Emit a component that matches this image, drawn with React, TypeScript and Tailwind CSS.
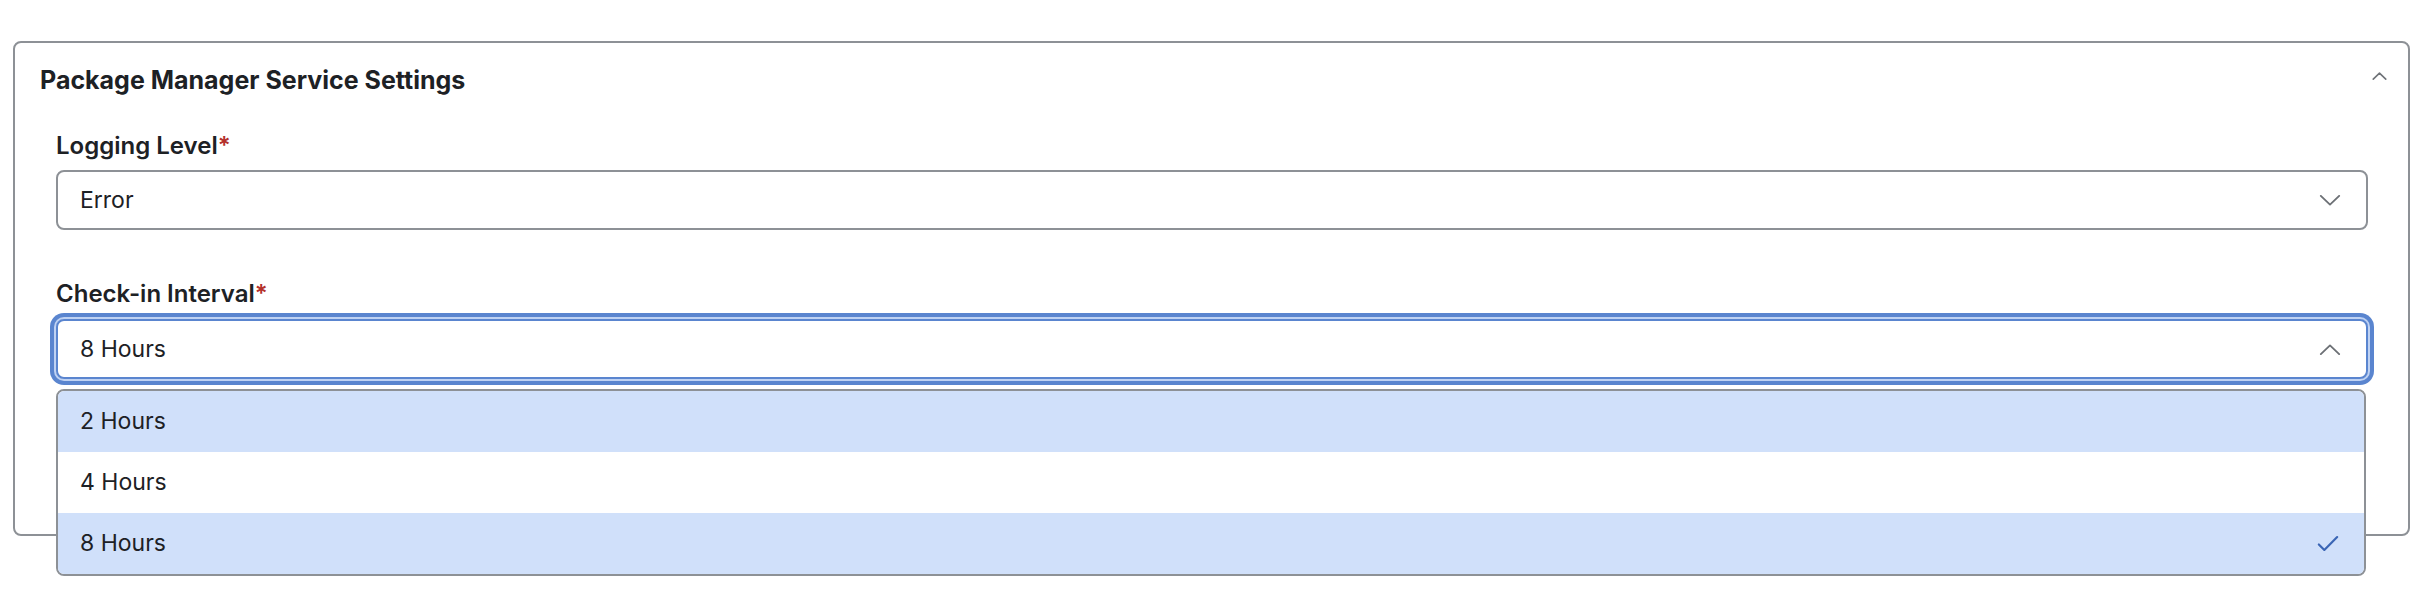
import { useState } from 'react'

const OPTIONS = ['2 Hours', '4 Hours', '8 Hours']

function Chevron({ up, className, width = 2 }: { up?: boolean; className?: string; width?: number }) {
  return (
    <svg viewBox="0 0 24 12" className={className} fill="none" stroke="currentColor" strokeWidth={width} strokeLinecap="round" strokeLinejoin="round">
      {up ? <path d="M2 11 L12 1.5 L22 11" /> : <path d="M2 1 L12 10.5 L22 1" />}
    </svg>
  )
}

function Label({ children }: { children: React.ReactNode }) {
  return (
    <div className="text-[24px] leading-[28px] font-semibold text-[#1d2125]">
      {children}
      <span className="text-[#b3312c]">*</span>
    </div>
  )
}

export default function App() {
  const [interval, setInterval] = useState('8 Hours')

  return (
    <div className="w-full h-[598px] bg-white pl-[13px] pr-[11px] pt-[41px] font-['Inter',sans-serif] text-[#1d2125]">
      <div className="border-2 border-[#8d9196] rounded-lg h-[495px]">
        {/* Header */}
        <div className="flex items-start justify-between pl-[25px] pr-[21px] pt-[22px]">
          <h2 className="text-[25px] leading-[30px] font-bold">Package Manager Service Settings</h2>
          <Chevron up width={2.6} className="mt-[7px] w-[15px] h-[8px] text-[#6f7378]" />
        </div>

        {/* Fields */}
        <div className="pl-[41px] pr-[40px] pt-[37px]">
          <Label>Logging Level</Label>
          <div className="mt-[10px] h-[60px] border-2 border-[#8d9196] rounded-lg flex items-center justify-between pl-[22px] pr-[25px]">
            <span className="text-[23px]">Error</span>
            <Chevron className="w-[22px] h-[11px] text-[#6c7075]" />
          </div>

          <div className="mt-[50px]">
            <Label>Check-in Interval</Label>
            <div className="relative mt-[11px]">
              <div className="h-[60px] border-2 border-[#5a85cf] rounded-lg ring-4 ring-[#5a85cf] ring-offset-2 ring-offset-[#bfd2f3] flex items-center justify-between pl-[22px] pr-[25px]">
                <span className="text-[23px]">{interval}</span>
                <Chevron up className="w-[22px] h-[11px] text-[#6c7075]" />
              </div>

              {/* Listbox */}
              <div className="absolute left-0 right-[2px] top-full mt-[10px] border-2 border-[#8d9196] rounded-lg overflow-hidden bg-white z-10">
                {OPTIONS.map((o, i) => (
                  <button
                    key={o}
                    onClick={() => setInterval(o)}
                    className={`w-full h-[61px] flex items-center justify-between pl-[22px] pr-[25px] text-left text-[23px] ${
                      o === interval || i === 0 ? 'bg-[#d0e0fa]' : 'bg-white'
                    }`}
                  >
                    <span>{o}</span>
                    {o === interval && (
                      <svg viewBox="0 0 24 18" className="w-[22px] h-[17px] text-[#3b66b5]" fill="none" stroke="currentColor" strokeWidth="2.4" strokeLinecap="round" strokeLinejoin="round">
                        <path d="M2 10 L8 16 L22 2" />
                      </svg>
                    )}
                  </button>
                ))}
              </div>
            </div>
          </div>
        </div>
      </div>
    </div>
  )
}
